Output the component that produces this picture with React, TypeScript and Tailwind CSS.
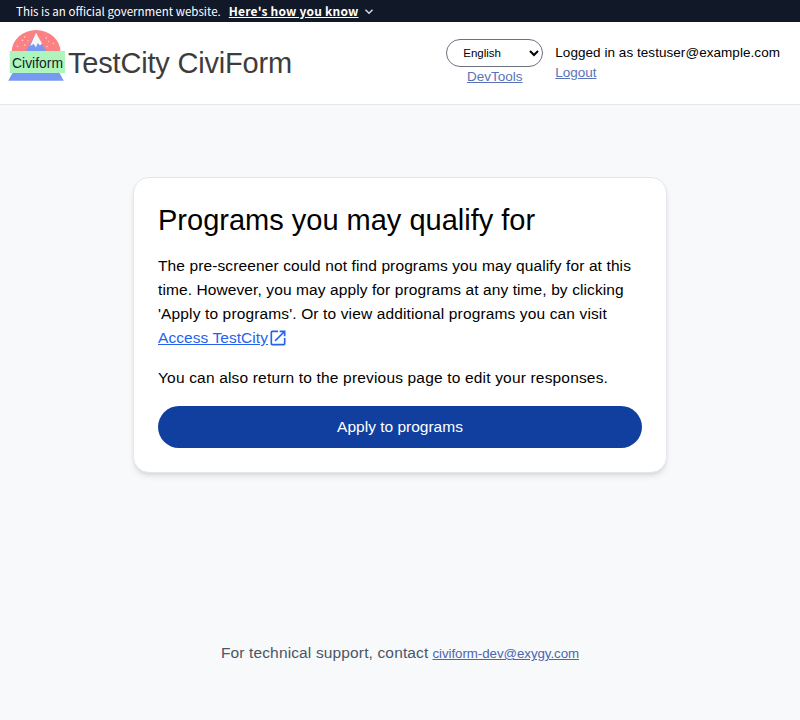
import { MdOpenInNew } from "react-icons/md";

function CityLogo() {
  return (
    <svg className="h-[52px] w-[58px] shrink-0" viewBox="8 29 58 52" role="img">
      <path d="M11.7 52a24.4 22 0 0 1 48.8 0z" fill="#fb8183" />
      <path d="M36 33.5L46.5 52H25.5z" fill="#7699f1" />
      <path d="M36 32.7l6 10.8-2 2-2.2-2.6-1.8 4.6-2.2-3.6-3.7 2z" fill="#f5f6f8" />
      <g fill="#fdd5d6">
        <circle cx="24.7" cy="37" r=".8" />
        <circle cx="22.5" cy="40.3" r=".8" />
        <circle cx="28" cy="40.5" r=".6" />
        <circle cx="17.5" cy="46.3" r=".8" />
        <circle cx="24.8" cy="45" r=".8" />
        <circle cx="46.3" cy="38" r=".8" />
        <circle cx="48.5" cy="41.3" r=".6" />
        <circle cx="53.5" cy="43.3" r=".8" />
        <circle cx="47" cy="46.5" r=".8" />
      </g>
      <path d="M12.5 73h47l4.3 7.7H8.2z" fill="#7699f1" />
      <path d="M9.7 51H65v22H9.7z" fill="#adf4bd" />
      <text
        x="12"
        y="68"
        textLength="51"
        lengthAdjust="spacingAndGlyphs"
        fill="#17251b"
        className="font-['Liberation_Sans',sans-serif] text-[13.8px]"
      >
        Civiform
      </text>
    </svg>
  );
}

function Banner() {
  return (
    <div className="flex h-[22px] items-center bg-[#111827] pl-4 font-['Noto_Sans_CJK_SC',sans-serif] text-[11.56px] leading-[22px] whitespace-nowrap text-white">
      <span>This is an official government website.</span>
      <button className="ml-2 flex items-center font-bold">
        <span className="text-[12px] tracking-[0.2px] underline underline-offset-1">Here's how you know</span>
        <svg className="ml-[5px] size-2.5" viewBox="0 0 10 10" fill="none" stroke="#d5d9e0" strokeWidth="1.5">
          <path d="M1.5 3.8L5 7.3l3.5-3.5" />
        </svg>
      </button>
    </div>
  );
}

function Header() {
  return (
    <header className="flex h-[83px] items-start border-b border-gray-200 bg-white pl-2">
      <div className="flex h-[59px] items-center pt-[7px]">
        <CityLogo />
        <span className="ml-0.5 pt-4 text-[29px] leading-9 tracking-[-0.19px] whitespace-nowrap text-[#3d3d3d]">
          TestCity CiviForm
        </span>
      </div>
      <div className="mt-[17px] ml-auto flex pr-5 text-[13.5px] leading-5">
        <div className="flex flex-col items-center">
          <button className="flex h-7 w-[97px] items-center justify-between rounded-full border border-gray-500 bg-white pr-[3px] pl-4 text-[11.5px] text-black">
            English
            <svg className="size-2.5" viewBox="0 0 10 10" fill="none" stroke="#000" strokeWidth="2">
              <path d="M1 3l4 4 4-4" />
            </svg>
          </button>
          <a className="text-[#5a72b8] underline underline-offset-1">DevTools</a>
        </div>
        <div className="ml-3 flex flex-col items-start pt-1">
          <span className="tracking-[0.05px] whitespace-nowrap text-black">
            Logged in as testuser@example.com
          </span>
          <a className="text-[#5a72b8] underline underline-offset-1">Logout</a>
        </div>
      </div>
    </header>
  );
}

export default function App() {
  return (
    <div className="flex h-[720px] w-[800px] flex-col overflow-hidden bg-[#f8f9fb] font-['Liberation_Sans',Arial,sans-serif]">
      <Banner />
      <Header />
      <main className="mx-auto mt-[72px] h-[296px] w-[534px] rounded-2xl border border-gray-200 bg-white px-6 pt-6 text-[15.5px] leading-6 whitespace-nowrap text-black shadow-md">
        <h1 className="text-[29px] leading-9">Programs you may qualify for</h1>
        <p className="mt-4">
          <span className="block tracking-[0.115px]">
            The pre-screener could not find programs you may qualify for at this
          </span>
          <span className="block tracking-[0.1px]">
            time. However, you may apply for programs at any time, by clicking
          </span>
          <span className="block tracking-[0.135px]">
            'Apply to programs'. Or to view additional programs you can visit
          </span>
          <a className="flex items-center text-[#2563eb]">
            <span className="tracking-[0.06px] underline underline-offset-1">Access TestCity</span>
            <MdOpenInNew className="size-5" />
          </a>
        </p>
        <p className="mt-4 tracking-[0.175px]">
          You can also return to the previous page to edit your responses.
        </p>
        <button className="mt-4 block h-[42px] w-full rounded-full bg-[#113f9f] text-white">
          Apply to programs
        </button>
      </main>
      <footer className="mt-[168px] flex items-baseline justify-center text-[15.5px] leading-6 whitespace-nowrap text-gray-600">
        <span className="tracking-[0.14px]">For technical support, contact</span>
        <a className="ml-1 text-[13.3px] tracking-[-0.05px] text-[#4b66b0] underline underline-offset-1">
          civiform-dev@exygy.com
        </a>
      </footer>
    </div>
  );
}
